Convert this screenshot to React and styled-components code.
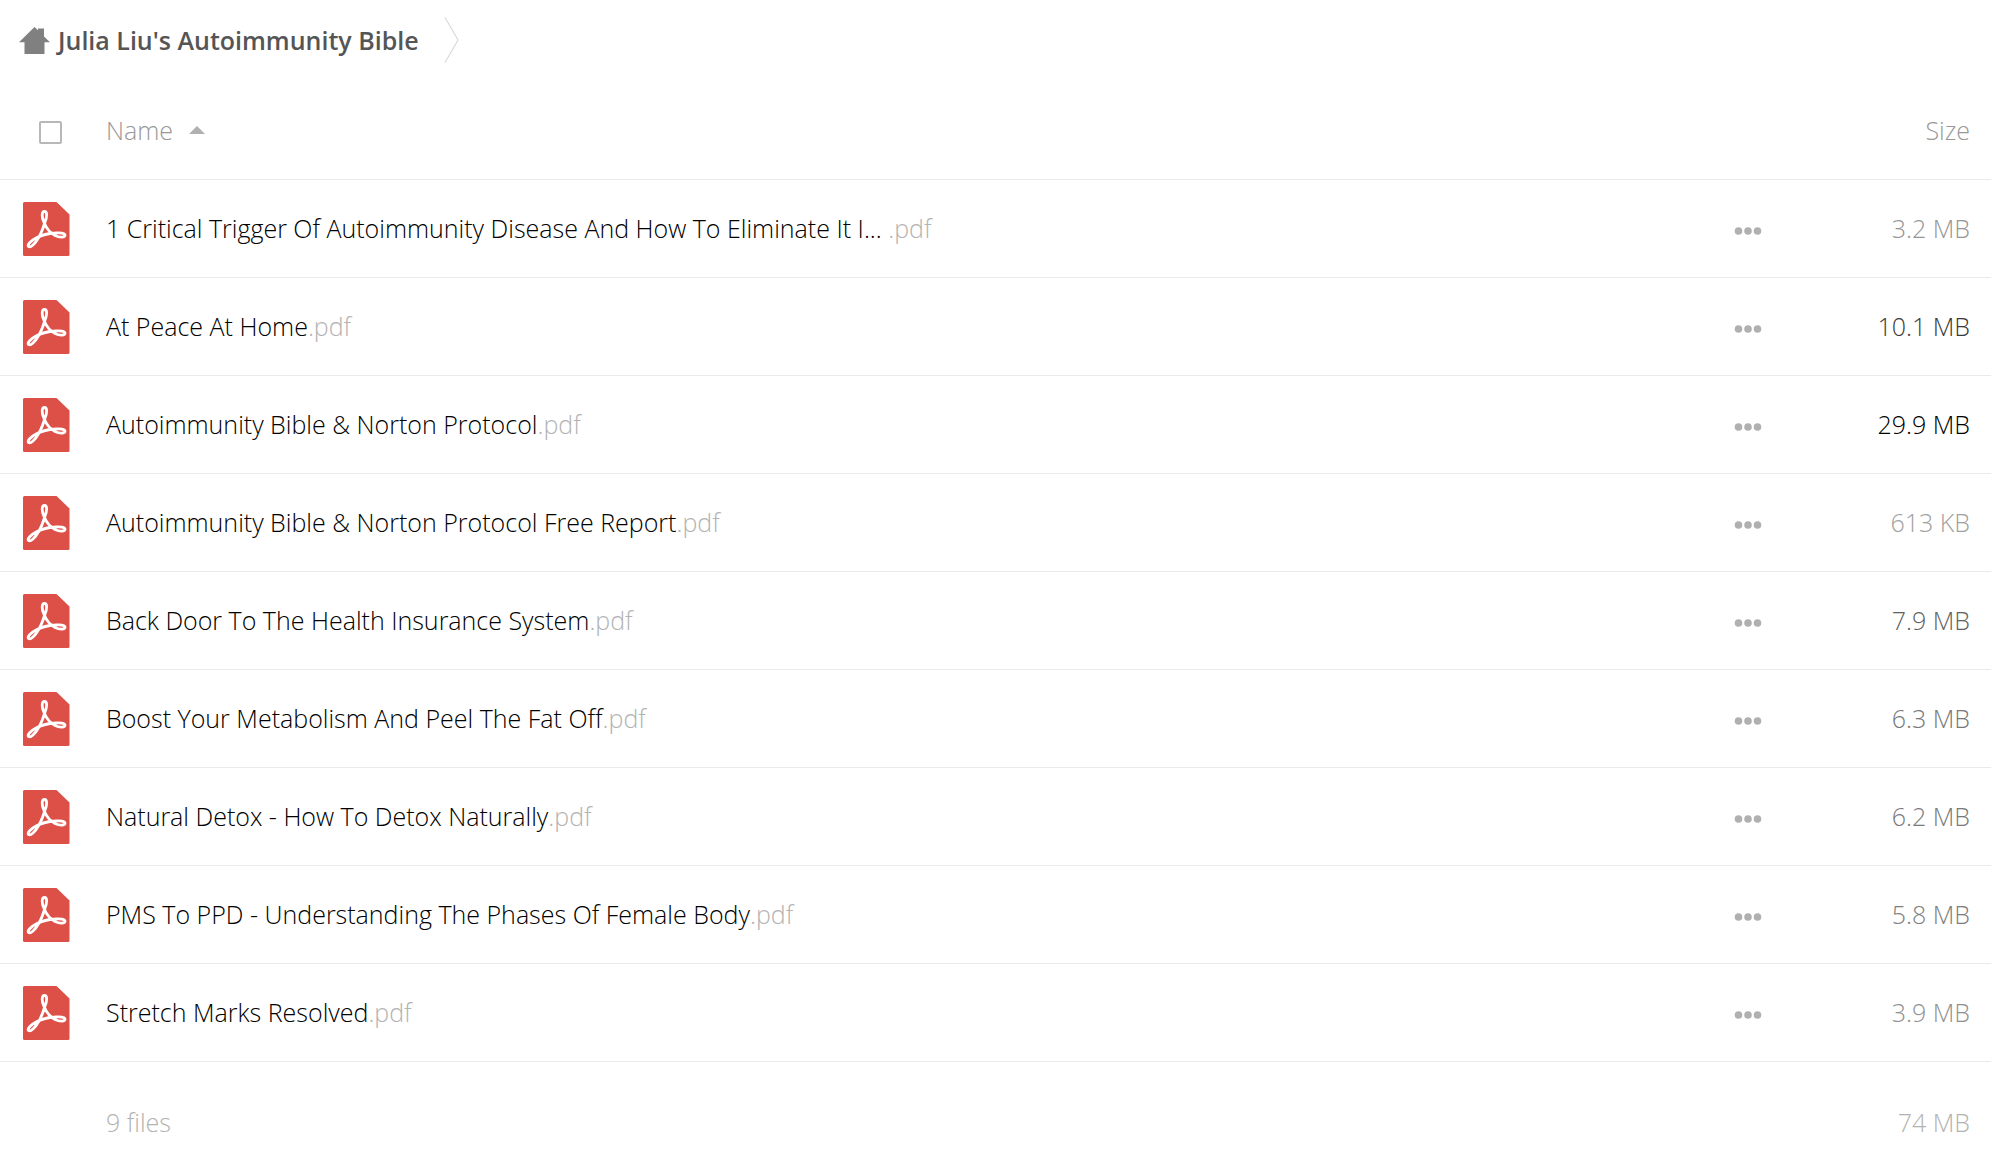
import styled, { createGlobalStyle } from 'styled-components';
import React from 'react';

const files = [
    { name: '1 Critical Trigger Of Autoimmunity Disease And How To Eliminate It I... ', size: 3.2 },
    { name: 'At Peace At Home', size: 10.1 },
    { name: 'Autoimmunity Bible & Norton Protocol', size: 29.9 },
    { name: 'Autoimmunity Bible & Norton Protocol Free Report', size: 0.6, label: '613 KB' },
    { name: 'Back Door To The Health Insurance System', size: 7.9 },
    { name: 'Boost Your Metabolism And Peel The Fat Off', size: 6.3 },
    { name: 'Natural Detox - How To Detox Naturally', size: 6.2 },
    { name: 'PMS To PPD - Understanding The Phases Of Female Body', size: 5.8 },
    { name: 'Stretch Marks Resolved', size: 3.9 }
]

// bigger files get a darker size label
const sizeColor = (mb) => {
    const level = Math.max(0, Math.round(160 - Math.pow(mb, 2)))
    return `rgb(${level}, ${level}, ${level})`
}

const HomeIcon = () => (
    <svg width="31" height="27" viewBox="0 0 31 27" aria-hidden="true">
        <path fill="#808080" d="M15.5 0L19 3.3V1.5H25V9.5L31 15.2H25.5V27H5.5V15.2H0Z" />
    </svg>
)

const PdfIcon = () => (
    <svg width="47" height="54" viewBox="0 0 47 54" aria-hidden="true">
        <path fill="#dc5047" d="M1.5 0H33.5L46.5 12.5V52.5Q46.5 54 45 54H1.5Q0 54 0 52.5V1.5Q0 0 1.5 0Z" />
        <path
            fill="none"
            stroke="#fff"
            strokeWidth="2.8"
            strokeLinejoin="round"
            d="M16 35C19 30 20.5 25 22 20C24 15 24.5 9.5 21.5 9.5C18.5 9.5 18.5 15 21 20.5C23.5 26.5 27 31 32 33.5C37 36 42 35.5 42 33.3C42 31 37 30.5 32 31C25 31.5 19 33 14 35.5C8 38.5 4 43 5.5 44.5C7.5 46 12 42 16 35Z"
        />
    </svg>
)

const App = () => {

    const [checked, setChecked] = React.useState(false)

    return (
        <>
            <GlobalStyle />
            <Breadcrumb>
                <Crumb href="#home">
                    <HomeIcon />
                    Julia Liu's Autoimmunity Bible
                </Crumb>
                <svg width="15" height="46" viewBox="0 0 15 46" aria-hidden="true">
                    <path fill="none" stroke="#d0d0d0" d="M1 0.5L14 23L1 45.5" />
                </svg>
            </Breadcrumb>
            <FileTable>
                <thead>
                    <tr>
                        <CheckCell>
                            <Checkbox
                                type="checkbox"
                                aria-label="Select all"
                                checked={checked}
                                onChange={() => setChecked(!checked)}
                            />
                        </CheckCell>
                        <HeadCell>
                            <SortButton>
                                Name
                                <svg width="16" height="8" viewBox="0 0 16 8" aria-hidden="true">
                                    <path fill="#b0b0b0" d="M8 0L16 8H0Z" />
                                </svg>
                            </SortButton>
                        </HeadCell>
                        <ActionHead />
                        <SizeHead><SortButton>Size</SortButton></SizeHead>
                    </tr>
                </thead>
                <tbody>
                    {files.map(file => (
                        <tr key={file.name}>
                            <IconCell><PdfIcon /></IconCell>
                            <Cell>
                                <FileLink href="#file">{file.name}<Extension>.pdf</Extension></FileLink>
                            </Cell>
                            <Cell>
                                <MoreButton aria-label="More actions">
                                    <svg width="27" height="8" viewBox="0 0 27 8" aria-hidden="true">
                                        <circle cx="3.5" cy="4" r="3.8" />
                                        <circle cx="13" cy="4" r="3.8" />
                                        <circle cx="22.5" cy="4" r="3.8" />
                                    </svg>
                                </MoreButton>
                            </Cell>
                            <SizeCell $color={sizeColor(file.size)}>{file.label || `${file.size} MB`}</SizeCell>
                        </tr>
                    ))}
                </tbody>
                <tfoot>
                    <tr>
                        <SummaryCell />
                        <SummaryCell>9 files</SummaryCell>
                        <SummaryCell />
                        <SummaryCell $right>74 MB</SummaryCell>
                    </tr>
                </tfoot>
            </FileTable>
        </>
    );
};

export default App;

const GlobalStyle = createGlobalStyle`
    *{
        box-sizing:border-box;
    }
    body{
        margin:0;
        background:#fff;
        font-family:"Open Sans", sans-serif;
        font-size:25px;
        font-weight:300;
        line-height:36px;
        color:#000;
    }
    svg{
        display:block;
        flex:none;
        overflow:visible;
    }
`

const Breadcrumb = styled.nav`
    display:flex;
    align-items:center;
    gap:25px;
    height:80px;
    padding-left:19px;
`

const Crumb = styled.a`
    display:flex;
    align-items:center;
    gap:8px;
    font-weight:600;
    color:#555;
    text-decoration:none;
`

const FileTable = styled.table`
    width:100%;
    table-layout:fixed;
    border-collapse:separate;
    border-spacing:0;
`

const Cell = styled.td`
    height:98px;
    padding:0 0 2px;
    border-bottom:1px solid #ebebeb;
    text-align:left;
    vertical-align:middle;
    white-space:nowrap;
`

const IconCell = styled(Cell)`
    padding:0 0 0 23px;
`

const HeadCell = styled(Cell).attrs({ as: 'th' })`
    height:100px;
    padding:0;
    font-weight:300;
    color:#999;
`

const CheckCell = styled(HeadCell)`
    width:106px;
    padding:6px 0 0 39px;
`

const ActionHead = styled(HeadCell)`
    width:120px;
`

const SizeHead = styled(HeadCell)`
    width:140px;
    padding-right:21px;
    text-align:right;
`

const SizeCell = styled(Cell)`
    padding-right:21px;
    text-align:right;
    color:${prop => prop.$color};
`

const SummaryCell = styled(Cell)`
    height:122px;
    padding-right:${prop => prop.$right ? '21px' : '0'};
    border:none;
    text-align:${prop => prop.$right ? 'right' : 'left'};
    color:#b3b3b3;
`

const Checkbox = styled.input`
    display:block;
    appearance:none;
    width:23px;
    height:23px;
    margin:0;
    border:2px solid #b8b8b8;
    border-radius:2px;
    background:#fff;
    &:checked{
        background:#b8b8b8;
    }
`

const SortButton = styled.button`
    display:inline-flex;
    align-items:center;
    gap:16px;
    padding:0;
    border:none;
    background:none;
    font:inherit;
    color:inherit;
    cursor:pointer;
`

const FileLink = styled.a`
    color:inherit;
    text-decoration:none;
`

const Extension = styled.span`
    color:#b3b3b3;
`

const MoreButton = styled.button`
    display:block;
    margin:0;
    padding:6px 4px 0 4px;
    border:none;
    background:none;
    fill:#b0b0b0;
    cursor:pointer;
`
